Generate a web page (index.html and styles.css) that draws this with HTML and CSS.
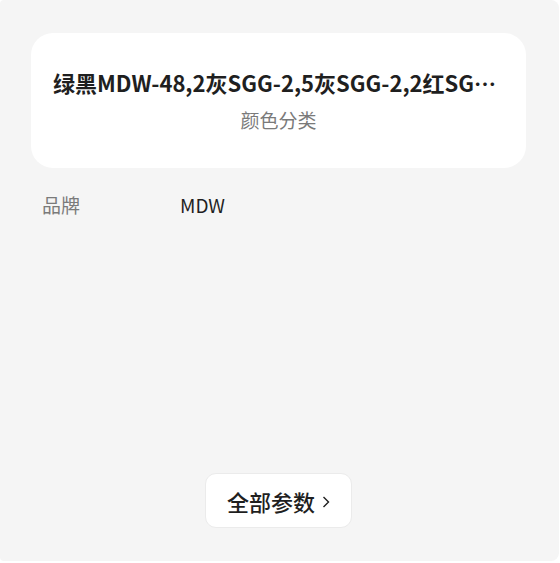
FILE: index.html
```html
<!DOCTYPE html>
<html lang="zh-CN">
<head>
    <meta charset="UTF-8">
    <meta name="viewport" content="width=device-width, initial-scale=1.0">
    <title>参数信息</title>
    <link rel="stylesheet" href="styles.css">
</head>
<body>
    <section class="params">
        <div class="highlight">
            <div class="highlight-value">绿黑MDW-48,2灰SGG-2,5灰SGG-2,2红SGG-2,5红SGG-2</div>
            <div class="highlight-label">颜色分类</div>
        </div>

        <dl class="param-list">
            <dt>品牌</dt>
            <dd>MDW</dd>
        </dl>

        <button type="button" class="more-button">
            <span>全部参数</span>
            <svg class="arrow" viewBox="0 0 8 12" aria-hidden="true">
                <path d="M1.5 1L6.5 6L1.5 11" />
            </svg>
        </button>
    </section>
</body>
</html>
```

FILE: styles.css
```css
* {
    margin: 0;
    padding: 0;
    box-sizing: border-box;
}

body {
    background-color: #fff;
    color: #1f1f1f;
    font-family: "Noto Sans CJK SC", sans-serif;
    font-size: 19px;
    line-height: 28px;
    min-height: 100vh;
    display: flex;
    padding: 0 1px 2px 0;
}

.params {
    flex: 1;
    min-width: 0;
    display: flex;
    flex-direction: column;
    background-color: #f5f5f5;
    border-radius: 4px 8px 8px 4px;
    padding: 33px 33px 33px 31px;
}

.highlight {
    background-color: #fff;
    border-radius: 22px;
    padding: 33px 22px;
    text-align: center;
}

.highlight-value {
    margin-bottom: 6px;
    font-size: 22px;
    line-height: 33px;
    font-weight: bold;
    white-space: nowrap;
    overflow: hidden;
    text-overflow: ellipsis;
}

.highlight-label {
    line-height: 30px;
    color: #7a7a7a;
}

.param-list {
    display: grid;
    grid-template-columns: 138px 1fr;
    padding: 23px 11px;
}

.param-list dt {
    color: #7a7a7a;
}

.more-button {
    display: flex;
    align-items: center;
    gap: 7px;
    align-self: center;
    margin-top: auto;
    padding: 11px 21px 9px;
    border: 1px solid #ebebeb;
    border-radius: 11px;
    background-color: #fff;
    color: #1f1f1f;
    font-family: inherit;
    font-size: 22px;
    font-weight: 500;
    line-height: 33px;
    cursor: pointer;
}

.arrow {
    width: 8px;
    height: 12px;
    fill: none;
    stroke: currentColor;
    stroke-width: 1.4;
}
```
